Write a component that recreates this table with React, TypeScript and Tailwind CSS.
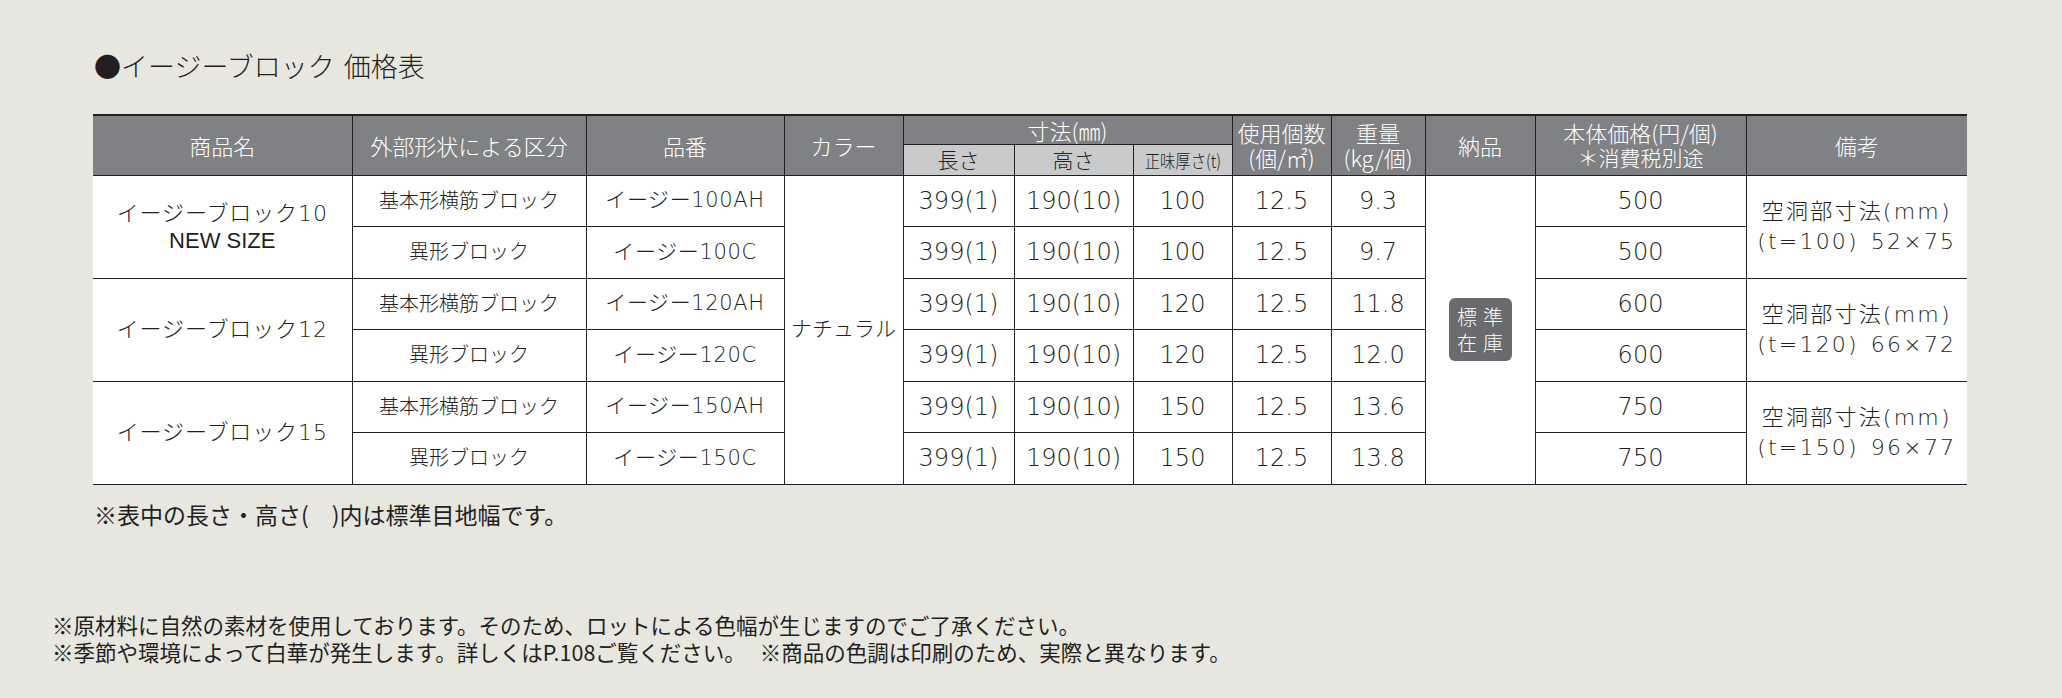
import React from 'react'

type Row = {
  shape: string
  code: string
  len: string
  height: string
  thick: string
  qty: string
  weight: string
  price: string
}

type Group = {
  name: string
  sub?: string
  note: [string, string, string]
  rows: Row[]
}

const GROUPS: Group[] = [
  {
    name: 'イージーブロック10',
    sub: 'NEW SIZE',
    note: ['空洞部寸法(mm)', '(t=100)', '52×75'],
    rows: [
      { shape: '基本形横筋ブロック', code: 'イージー100AH', len: '399(1)', height: '190(10)', thick: '100', qty: '12.5', weight: '9.3', price: '500' },
      { shape: '異形ブロック', code: 'イージー100C', len: '399(1)', height: '190(10)', thick: '100', qty: '12.5', weight: '9.7', price: '500' },
    ],
  },
  {
    name: 'イージーブロック12',
    note: ['空洞部寸法(mm)', '(t=120)', '66×72'],
    rows: [
      { shape: '基本形横筋ブロック', code: 'イージー120AH', len: '399(1)', height: '190(10)', thick: '120', qty: '12.5', weight: '11.8', price: '600' },
      { shape: '異形ブロック', code: 'イージー120C', len: '399(1)', height: '190(10)', thick: '120', qty: '12.5', weight: '12.0', price: '600' },
    ],
  },
  {
    name: 'イージーブロック15',
    note: ['空洞部寸法(mm)', '(t=150)', '96×77'],
    rows: [
      { shape: '基本形横筋ブロック', code: 'イージー150AH', len: '399(1)', height: '190(10)', thick: '150', qty: '12.5', weight: '13.6', price: '750' },
      { shape: '異形ブロック', code: 'イージー150C', len: '399(1)', height: '190(10)', thick: '150', qty: '12.5', weight: '13.8', price: '750' },
    ],
  },
]

// header cells
const TH =
  'bg-[#808184] text-white font-light text-[22px] leading-[25px] text-center align-middle border-[1.5px] border-t-2 border-[#231f20] p-0'
const SUB =
  'bg-[#c9cacb] text-[#231f20] font-light text-[21px] leading-none text-center align-middle border-[1.5px] border-[#231f20] p-0'
// body cells
const TD = 'text-center align-middle border-[1.5px] border-[#231f20] p-0 bg-white'
const NUM = `${TD} text-[24px] font-light`
const JA = `${TD} text-[20px] font-light`

export default function App() {
  return (
    <div className="w-[2062px] h-[698px] bg-[#e7e6df] text-[#231f20] font-['Noto_Sans_CJK_JP',sans-serif] overflow-hidden">
      <div className="flex flex-col pl-[93px] pt-[52px]">
        <h1 className="text-[27px] leading-[28px] font-light text-[#231f20] ml-[1px]">
          ●イージーブロック<span className="ml-[9px]">価格表</span>
        </h1>

        <table className="table-fixed border-collapse w-[1874px] mt-[34px] font-['DejaVu_Sans','Noto_Sans_CJK_JP',sans-serif]">
          <colgroup>
            <col className="w-[259px]" />
            <col className="w-[234px]" />
            <col className="w-[198px]" />
            <col className="w-[119px]" />
            <col className="w-[111px]" />
            <col className="w-[119px]" />
            <col className="w-[99px]" />
            <col className="w-[99px]" />
            <col className="w-[94px]" />
            <col className="w-[110px]" />
            <col className="w-[211px]" />
            <col className="w-[221px]" />
          </colgroup>
          <thead className="font-['Noto_Sans_CJK_JP',sans-serif]">
            <tr className="h-[29px]">
              <th rowSpan={2} className={`${TH} border-l-0`}>商品名</th>
              <th rowSpan={2} className={TH}>外部形状による区分</th>
              <th rowSpan={2} className={TH}>品番</th>
              <th rowSpan={2} className={TH}>カラー</th>
              <th colSpan={3} className={`${TH} leading-none`}>寸法(㎜)</th>
              <th rowSpan={2} className={TH}>
                <div>使用個数</div>
                <div>(個/㎡)</div>
              </th>
              <th rowSpan={2} className={TH}>
                <div>重量</div>
                <div>(kg/個)</div>
              </th>
              <th rowSpan={2} className={TH}>納品</th>
              <th rowSpan={2} className={TH}>
                <div>本体価格(円/個)</div>
                <div className="text-[21px]">＊消費税別途</div>
              </th>
              <th rowSpan={2} className={`${TH} border-r-0`}>備考</th>
            </tr>
            <tr className="h-[31px]">
              <th className={SUB}>長さ</th>
              <th className={SUB}>高さ</th>
              <th className={SUB}>
                <span className="inline-block text-[18px] scale-x-[0.85] whitespace-nowrap">正味厚さ(t)</span>
              </th>
            </tr>
          </thead>
          <tbody>
            {GROUPS.map((g, gi) =>
              g.rows.map((r, ri) => (
                <tr key={`${gi}-${ri}`} className="h-[51.5px]">
                  {ri === 0 && (
                    <td rowSpan={2} className={`${TD} border-l-0 text-[22px] leading-[27px]`}>
                      <div className="font-light tracking-[0.04em]">{g.name}</div>
                      {g.sub && <div className="font-['Liberation_Sans',sans-serif] text-[22px]">{g.sub}</div>}
                    </td>
                  )}
                  <td className={JA}>{r.shape}</td>
                  <td className={`${TD} text-[21px] tracking-[0.03em] font-light`}>{r.code}</td>
                  {gi === 0 && ri === 0 && (
                    <td rowSpan={6} className={`${TD} text-[21px] font-light`}>ナチュラル</td>
                  )}
                  <td className={NUM}>{r.len}</td>
                  <td className={NUM}>{r.height}</td>
                  <td className={NUM}>{r.thick}</td>
                  <td className={NUM}>{r.qty}</td>
                  <td className={NUM}>{r.weight}</td>
                  {gi === 0 && ri === 0 && (
                    <td rowSpan={6} className={TD}>
                      <div className="mx-auto flex h-[63px] w-[63px] flex-col items-center justify-center rounded-[6px] bg-[#6a6b6e] font-['Noto_Sans_CJK_JP',sans-serif] text-[20px] leading-[26px] font-light text-white">
                        <div className="flex gap-[6px]"><span>標</span><span>準</span></div>
                        <div className="flex gap-[6px]"><span>在</span><span>庫</span></div>
                      </div>
                    </td>
                  )}
                  <td className={NUM}>{r.price}</td>
                  {ri === 0 && (
                    <td rowSpan={2} className={`${TD} border-r-0 text-[22px] leading-[30px] tracking-[0.1em] font-light whitespace-nowrap`}>
                      <div>{g.note[0]}</div>
                      <div>
                        {g.note[1]}
                        <span className="ml-[12px]">{g.note[2]}</span>
                      </div>
                    </td>
                  )}
                </tr>
              ))
            )}
          </tbody>
        </table>

        <p className="mt-[15px] text-[23px] leading-[28px] ml-[1px]">※表中の長さ・高さ(　)内は標準目地幅です。</p>
      </div>

      <div className="pl-[52px] mt-[83px] text-[21.5px] leading-[27px]">
        <p>※原材料に自然の素材を使用しております。そのため、ロットによる色幅が生じますのでご了承ください。</p>
        <p>
          ※季節や環境によって白華が発生します。詳しくはP.108ご覧ください。
          <span className="ml-[14px]">※商品の色調は印刷のため、実際と異なります。</span>
        </p>
      </div>
    </div>
  )
}
